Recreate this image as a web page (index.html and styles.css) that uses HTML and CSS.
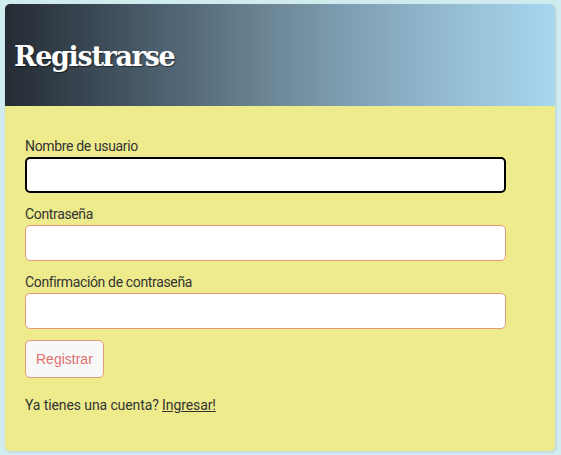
FILE: index.html
```html
<!DOCTYPE html>
<html lang="es">
<head>
<meta charset="utf-8">
<title>Registrarse</title>
<link rel="stylesheet" href="styles.css">
</head>
<body>
<div class="card">
  <header class="card-header">
    <h1 class="title">Registrarse</h1>
  </header>
  <form class="card-body">
    <div class="field">
      <label class="label" for="u">Nombre de usuario</label>
      <input class="input focused" id="u" type="text">
    </div>
    <div class="field">
      <label class="label" for="p">Contraseña</label>
      <input class="input" id="p" type="password">
    </div>
    <div class="field">
      <label class="label" for="c">Confirmación de contraseña</label>
      <input class="input" id="c" type="password">
    </div>
    <button class="btn" type="button">Registrar</button>
    <p class="footer-text">Ya tienes una cuenta? <a href="#" class="link">Ingresar!</a></p>
  </form>
</div>
</body>
</html>
```
FILE: styles.css
```css
html, body {
  margin: 0;
  padding: 0;
}
body {
  background: #d0ecef;
  padding: 4px 6px 5px 5px;
  font-family: "Roboto", sans-serif;
}
.card {
  border-radius: 5px;
  overflow: hidden;
  box-shadow: 1px 1px 3px rgba(0,0,0,0.12);
  background: #eeeb8d;
}
.card-header {
  height: 102px;
  display: flex;
  align-items: center;
  padding-left: 9px;
  background: linear-gradient(to right, #242b33 0%, #4f6372 30%, #6f8a9a 50%, #8eb3c9 75%, #a8d7f0 100%);
}
.title {
  margin: 0;
  margin-top: 2px;
  color: #fff;
  font-family: "DejaVu Serif", serif;
  font-weight: bold;
  font-size: 27px;
  letter-spacing: -1.3px;
  text-shadow: 1px 1px 1px rgba(0,0,0,0.5);
}
.card-body {
  padding: 30px 49px 36px 20px;
  display: flex;
  flex-direction: column;
}
.field {
  display: flex;
  flex-direction: column;
  margin-bottom: 11px;
}
.label {
  font-size: 14px;
  letter-spacing: -0.35px;
  color: #333;
  line-height: 20px;
  margin-bottom: 1px;
}
.input {
  box-sizing: border-box;
  height: 36px;
  width: 100%;
  border: 1px solid #e59a7c;
  border-radius: 5px;
  background: #fff;
  margin: 0;
}
.input.focused {
  border: 2px solid #000;
  border-radius: 5px;
  outline: none;
}
.btn {
  align-self: flex-start;
  margin-top: 0;
  height: 38px;
  padding: 0 10px;
  border: 1px solid #e59a7c;
  border-radius: 5px;
  background: #f8f8f8;
  color: #e07070;
  font-family: "Liberation Sans", Arial, sans-serif;
  font-size: 14px;
}
.footer-text {
  margin: 17px 0 0 0;
  font-size: 14px;
  letter-spacing: -0.1px;
  color: #333;
  line-height: 20px;
}
.link {
  color: #333;
  text-decoration: underline;
}
```
